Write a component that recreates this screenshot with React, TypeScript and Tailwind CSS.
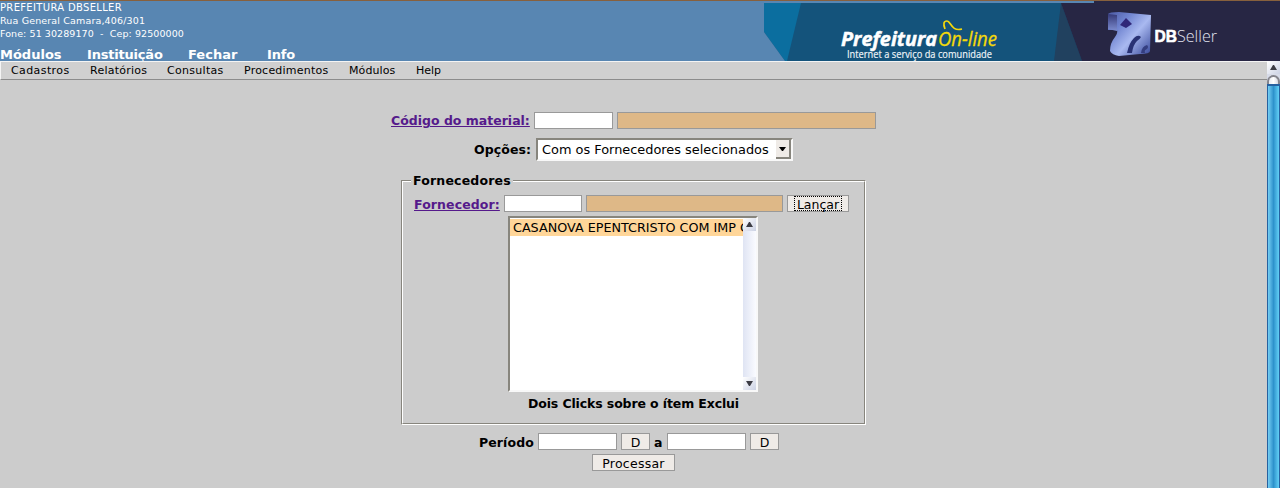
import React from "react";

const box = "h-[17px] border border-[#999] shrink-0";
const btn = "h-[17px] border border-[#999] bg-[#efebe7] shrink-0 flex items-center justify-center text-[12.5px] leading-[15px] pt-[2px]";
const inset = "border-2 border-t-[#87857d] border-r-[#f8f8f8] border-b-[#f8f8f8] border-l-[#87857d] bg-white";

function Arrow({ down = false }: { down?: boolean }) {
  return (
    <div className="flex h-[13px] w-[13px] shrink-0 items-center justify-center bg-linear-to-br from-[#ffffff] to-[#ccd2e4]">
      <svg width="7" height="5" viewBox="0 0 7 5">
        <path d={down ? "M0 0H7L4 5H3Z" : "M3 0H4L7 5H0Z"} fill="#3c3c44" />
      </svg>
    </div>
  );
}

function Banner() {
  return (
    <svg className="block h-[60px] w-[516px]" viewBox="764 1 516 60">
      <defs>
        <linearGradient id="cube" x1="0" y1="0" x2="1" y2=".9">
          <stop offset="0" stopColor="#4c5aa3" />
          <stop offset=".3" stopColor="#6e82cf" />
          <stop offset=".6" stopColor="#a9b9f0" />
          <stop offset="1" stopColor="#3f50a0" />
        </linearGradient>
        <linearGradient id="side" x1="0" y1="0" x2="0" y2="1">
          <stop offset="0" stopColor="#353978" />
          <stop offset="1" stopColor="#7d8dd0" />
        </linearGradient>
      </defs>
      <rect x="764" y="3" width="516" height="58" fill="#14537b" />
      <path d="M764 3H801L787 61H785L764 32Z" fill="#0b6e9f" />
      <path d="M764 32L785 61H764Z" fill="#5886b2" />
      <path d="M1061 3L1082 61H1054Z" fill="#21415f" />
      <path d="M1061 3H1094V1H1280V61H1082Z" fill="#272644" />
      <text x="841" y="46" fontFamily="Open Sans" fontSize="20" fontWeight="700" fontStyle="italic" fill="#fff" stroke="#fff" strokeWidth=".5" textLength="96" lengthAdjust="spacingAndGlyphs">Prefeitura</text>
      <text x="938" y="46" fontFamily="Open Sans" fontSize="20" fontStyle="italic" fill="#f5d90a" stroke="#f5d90a" strokeWidth=".3" textLength="59" lengthAdjust="spacingAndGlyphs">On-line</text>
      <path d="M945 29Q942 21 947 21C951 21 951 32 962 29" fill="none" stroke="#f5d90a" strokeWidth="1.7" />
      <text x="847" y="57.5" fontFamily="Open Sans" fontSize="10" fill="#f2f6fa" stroke="#f2f6fa" strokeWidth=".15" textLength="145" lengthAdjust="spacingAndGlyphs">Internet a serviço da comunidade</text>
      <path d="M1108 14Q1109 12 1119 12L1151 15L1150 51Q1150 54 1140 54L1119 56Q1112 55 1110 51Q1110 43 1115 37Q1118 33 1117 30L1108 30Z" fill="url(#cube)" />
      <path d="M1108 14L1117 15V31L1108 29Z" fill="url(#side)" />
      <path d="M1126 18L1132 24L1126 28L1120 25Z" fill="#302779" />
      <path d="M1127 53Q1129 43 1134 38Q1138 34 1141 37Q1140 39 1137 41Q1133 45 1132 53Z" fill="#293274" />
      <path d="M1141 53Q1142 46 1147 45Q1149 47 1147 49Q1144 50 1145 53Z" fill="#343e80" />
      <text x="1154.5" y="42" fontFamily="Liberation Sans" fontSize="17" fontWeight="700" fill="#fff" stroke="#fff" strokeWidth=".6" textLength="22.5" lengthAdjust="spacingAndGlyphs">DB</text>
      <text x="1177" y="42" fontFamily="Open Sans" fontSize="17" fontWeight="300" fill="#e2e4f0" textLength="40" lengthAdjust="spacingAndGlyphs">Seller</text>
    </svg>
  );
}

export default function App() {
  return (
    <div className="flex h-[488px] w-[1280px] flex-col overflow-hidden bg-[#ccc] font-['DejaVu_Sans',sans-serif] text-[12.5px] whitespace-pre text-black">
      <header className="flex h-[61px] shrink-0 justify-between border-t border-[#87603d] bg-[#5886b2] text-white">
        <div>
          <div className="h-[46px] text-[9.5px] leading-[13px]">
            <div className="text-[10px] tracking-[0.33px]">PREFEITURA DBSELLER</div>
            <div className="tracking-[0.15px]">Rua General Camara,406/301</div>
            <div className="tracking-[0.08px]">Fone: 51 30289170  -  Cep: 92500000</div>
          </div>
          <nav className="flex text-[13px] leading-[14px] font-bold">
            <span className="w-[87px] pt-[1px]">Módulos</span>
            <span className="w-[101px] pt-[1px] tracking-[-0.2px]">Instituição</span>
            <span className="w-[79px] pt-[1px]">Fechar</span>
            <span className="pt-[1px] tracking-[-0.2px]">Info</span>
          </nav>
        </div>
        <Banner />
      </header>
      <div className="flex min-h-0 flex-1">
        <main className="w-[1267px]">
          <nav className="flex h-[19px] border-t border-b border-l border-t-[#f4f4f4] border-b-[#8c8c8c] border-l-[#f4f4f4] bg-[#d0d0d0] pl-[10px] text-[11px] leading-[17px]">
            <span className="w-[79px] tracking-[0.4px]">Cadastros</span>
            <span className="w-[77px] tracking-[0.25px]">Relatórios</span>
            <span className="w-[77px] tracking-[0.3px]">Consultas</span>
            <span className="w-[105px] tracking-[0.22px]">Procedimentos</span>
            <span className="w-[67px] tracking-[0.1px]">Módulos</span>
            <span>Help</span>
          </nav>
          <div className="mt-[32px] ml-[391px] flex h-[17px] items-center">
            <a className="w-[143px] pt-[2px] font-bold text-[#551a8b] underline">Código do material:</a>
            <div className={`${box} w-[79px] bg-white`} />
            <div className={`${box} ml-[4px] w-[259px] bg-[#deb887]`} />
          </div>
          <div className="mt-[9px] ml-[474px] flex h-[23px] items-center">
            <span className="w-[62px] pt-[2px] font-bold tracking-[0.1px]">Opções:</span>
            <div className={`${inset} flex h-[23px] w-[257px] items-center justify-between pl-[4px]`}>
              <span className="text-[12.9px]">Com os Fornecedores selecionados</span>
              <div className="flex h-[19px] w-[15px] items-center justify-center border-r-2 border-b-2 border-[#87857d] bg-[#efebe7]">
                <svg width="7" height="4" viewBox="0 0 7 4"><path d="M0 0H7L4 4H3Z" /></svg>
              </div>
            </div>
          </div>
          <section className="mt-[19px] ml-[401px] h-[245px] w-[465px] border border-t-[#87857d] border-r-white border-b-white border-l-[#87857d]">
            <div className="h-full border border-t-white border-r-[#87857d] border-b-[#87857d] border-l-white">
              <h2 className="-mt-[9px] ml-[8px] h-[15px] w-[102px] bg-[#ccc] pl-[2px] leading-[15px] font-bold tracking-[0.18px]">Fornecedores</h2>
              <div className="mt-[7px] ml-[11px] flex h-[17px] items-center">
                <a className="w-[90px] pt-[3px] font-bold tracking-[0.1px] text-[#551a8b] underline">Fornecedor:</a>
                <div className={`${box} w-[78px] bg-white`} />
                <div className={`${box} ml-[4px] w-[197px] bg-[#deb887]`} />
                <button className={`${btn} ml-[4px] w-[62px] !pt-0`}>
                  <span className="h-[15px] w-[48px] border border-dotted border-black pt-[1px] text-center leading-[14px]">Lançar</span>
                </button>
              </div>
              <div className={`${inset} mt-[4px] ml-[105px] flex h-[176px] w-[250px]`}>
                <div className="w-[233px] overflow-hidden pt-[1px]">
                  <div className="h-[17px] overflow-hidden bg-[#ffd699] pl-[3px] text-[12.75px] leading-[17px]">CASANOVA EPENTCRISTO COM IMP COM</div>
                </div>
                <div className="flex w-[13px] flex-col justify-between bg-linear-to-r from-[#dfe4f3] to-[#fafbff]">
                  <Arrow />
                  <Arrow down />
                </div>
              </div>
              <div className="mt-[4px] text-center leading-[16px] font-bold tracking-[-0.12px]">Dois Clicks sobre o ítem Exclui</div>
            </div>
          </section>
          <div className="mt-[8px] ml-[479px] flex h-[17px] items-center">
            <span className="w-[59px] pt-[3px] font-bold tracking-[0.1px]">Período</span>
            <div className={`${box} w-[79px] bg-white`} />
            <button className={`${btn} ml-[4px] w-[29px]`}>D</button>
            <span className="w-[17px] pt-[3px] pl-[4px] font-bold">a</span>
            <div className={`${box} w-[79px] bg-white`} />
            <button className={`${btn} ml-[4px] w-[29px]`}>D</button>
          </div>
          <button className={`${btn} mt-[4px] ml-[592px] w-[83px] tracking-[0.25px]`}>Processar</button>
        </main>
        <aside className="flex w-[13px] flex-col bg-[#d7dbe8]">
          <Arrow />
          <div className="mt-[1px] h-[9px] rounded-t-full border-2 border-b-0 border-[#85858d] bg-linear-to-r from-[#e8eaf0] via-white to-[#d8dae4]" />
          <div className="flex-1 border-t-2 border-r border-l border-[#2661a0] bg-linear-to-r from-[#74cff4] via-[#2d92cc] to-[#62d0f6]" />
        </aside>
      </div>
    </div>
  );
}
